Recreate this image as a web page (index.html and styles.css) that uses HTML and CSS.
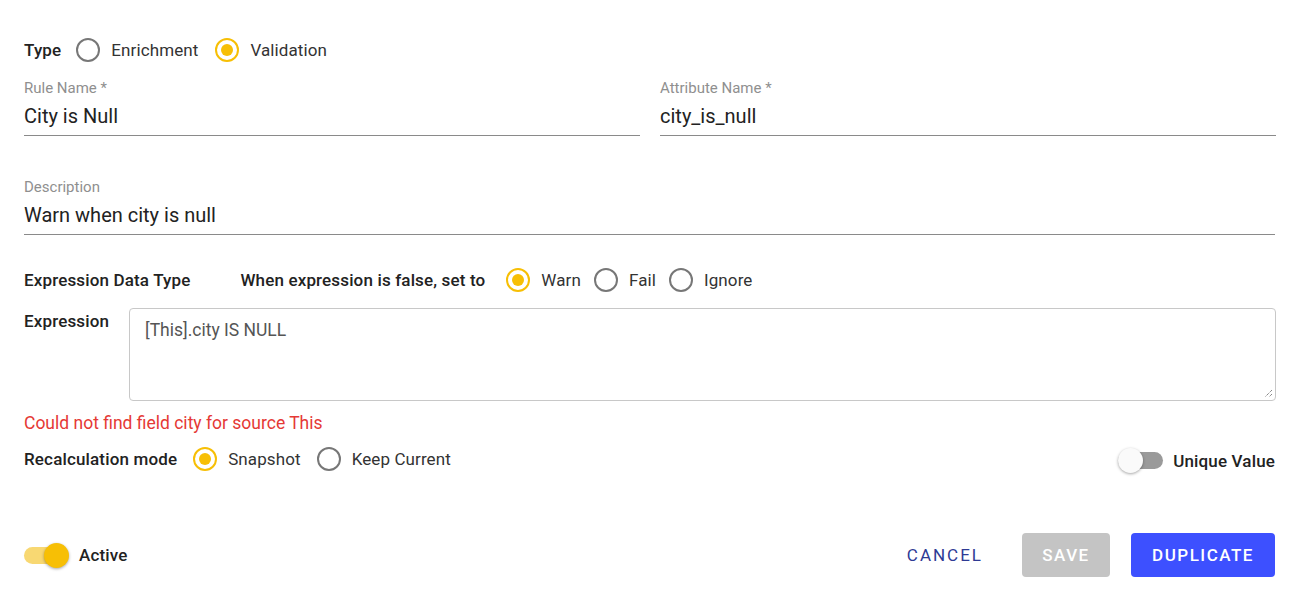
FILE: index.html
```html
<!DOCTYPE html>
<html>
<head>
<meta charset="utf-8">
<link rel="stylesheet" href="styles.css">
</head>
<body>
<div class="form">
  <div class="row type-row">
    <span class="strong-label">Type</span>
    <label class="radio"><span class="dot"></span><span>Enrichment</span></label>
    <label class="radio"><span class="dot on"></span><span>Validation</span></label>
  </div>

  <div class="two-col">
    <div class="field">
      <div class="f-label">Rule Name *</div>
      <div class="f-value">City is Null</div>
    </div>
    <div class="field">
      <div class="f-label">Attribute Name *</div>
      <div class="f-value">city_is_null</div>
    </div>
  </div>

  <div class="field desc">
    <div class="f-label">Description</div>
    <div class="f-value">Warn when city is null</div>
  </div>

  <div class="row expr-type-row">
    <span class="strong-label">Expression Data Type</span>
    <span class="strong-label when">When expression is false, set to</span>
    <label class="radio"><span class="dot on"></span><span>Warn</span></label>
    <label class="radio"><span class="dot"></span><span>Fail</span></label>
    <label class="radio"><span class="dot"></span><span>Ignore</span></label>
  </div>

  <div class="expr-row">
    <span class="strong-label expr-label">Expression</span>
    <div class="textarea">
      <span>[This].city IS NULL</span>
      <svg class="grip" width="10" height="10" viewBox="0 0 10 10"><path d="M9 2 L2 9 M9 6 L6 9" stroke="#555" stroke-width="1" stroke-dasharray="1 1" fill="none"/></svg>
    </div>
  </div>

  <div class="error">Could not find field city for source This</div>

  <div class="recalc-row">
    <div class="row">
      <span class="strong-label">Recalculation mode</span>
      <label class="radio"><span class="dot on"></span><span>Snapshot</span></label>
      <label class="radio"><span class="dot"></span><span>Keep Current</span></label>
    </div>
    <div class="switch-wrap unique">
      <span class="switch off"><span class="track"></span><span class="thumb"></span></span>
      <span class="strong-label">Unique Value</span>
    </div>
  </div>

  <div class="footer">
    <div class="switch-wrap">
      <span class="switch on"><span class="track"></span><span class="thumb"></span></span>
      <span class="strong-label">Active</span>
    </div>
    <div class="buttons">
      <button class="btn text">CANCEL</button>
      <button class="btn disabled">SAVE</button>
      <button class="btn primary">DUPLICATE</button>
    </div>
  </div>
</div>
</body>
</html>
```

FILE: styles.css
```css
* { box-sizing: border-box; }
html, body { margin: 0; padding: 0; background: #fff; }
body {
  font-family: Roboto, "Liberation Sans", sans-serif;
  color: #212121;
  width: 1300px;
  height: 614px;
  overflow: hidden;
}
.form {
  padding: 38px 24px 0 24px;
  display: flex;
  flex-direction: column;
}
.row {
  display: flex;
  align-items: center;
  height: 24px;
}
.strong-label {
  font-size: 17px;
  font-weight: 500;
  letter-spacing: 0.15px;
  color: #222;
  line-height: 24px;
  white-space: nowrap;
}
.type-row .strong-label { margin-right: 15px; }
.radio {
  display: flex;
  align-items: center;
  font-size: 17px;
  letter-spacing: 0.1px;
  color: #333;
  margin-right: 15px;
  line-height: 24px;
}
.type-row .radio { margin-right: 17px; }
.dot {
  width: 24px;
  height: 24px;
  border: 2px solid #777;
  border-radius: 50%;
  margin-right: 11px;
  position: relative;
  flex: none;
}
.dot.on { border-color: #f7bf05; }
.dot.on::after {
  content: "";
  position: absolute;
  left: 4px; top: 4px;
  width: 12px; height: 12px;
  border-radius: 50%;
  background: #f7bf05;
}
.two-col {
  display: flex;
  gap: 20px;
  margin-top: 17px;
}
.two-col .field { flex: 1; }
.field {
  border-bottom: 1px solid #8a8a8a;
  padding-bottom: 5px;
}
.f-label {
  font-size: 15px;
  line-height: 18px;
  color: #8f8f8f;
}
.f-value {
  font-size: 20px;
  line-height: 28px;
  color: #222;
  margin-top: 5px;
}
.desc {
  margin-top: 42px;
  margin-right: 1px;
}
.expr-type-row { margin-top: 33px; }
.expr-type-row .strong-label { margin-right: 50px; }
.expr-type-row .strong-label.when { margin-right: 21px; }
.expr-type-row .radio { margin-right: 13px; }
.expr-row {
  display: flex;
  align-items: flex-start;
  margin-top: 16px;
}
.expr-label {
  width: 105px;
  line-height: 26px;
  flex: none;
}
.textarea {
  flex: 1;
  height: 93px;
  border: 1px solid #c8c8c8;
  border-radius: 4px;
  padding: 11px 15px;
  font-size: 17.5px;
  line-height: 20px;
  color: #555;
  position: relative;
}
.grip {
  position: absolute;
  right: 2px;
  bottom: 2px;
}
.error {
  color: #e53935;
  font-size: 17.5px;
  line-height: 22px;
  margin-top: 11px;
}
.recalc-row {
  display: flex;
  justify-content: space-between;
  align-items: center;
  margin-top: 10px;
}
.recalc-row .row .strong-label { margin-right: 16px; }
.recalc-row .radio { margin-right: 16px; }
.switch-wrap {
  display: flex;
  align-items: center;
}
.unique { margin-top: 4px; margin-right: 1px; }
.switch {
  position: relative;
  width: 45px;
  height: 25px;
  margin-right: 10px;
  flex: none;
}
.track {
  position: absolute;
  left: 0; top: 4px;
  width: 45px;
  height: 17px;
  border-radius: 9px;
}
.thumb {
  position: absolute;
  top: 0;
  width: 25px;
  height: 25px;
  border-radius: 50%;
  box-shadow: 0 1px 3px rgba(0,0,0,0.35);
}
.switch.on .track { background: #f8d872; width: 42px; }
.switch.on .thumb { left: 20px; background: #f7bf05; }
.switch.off .track { background: #9a9a9a; }
.switch.off .thumb { left: 0; background: #fafafa; }
.footer {
  display: flex;
  justify-content: space-between;
  align-items: center;
  margin-top: 60px;
  margin-right: 1px;
}
.buttons {
  display: flex;
  gap: 21px;
}
.btn {
  font-family: Roboto, "Liberation Sans", sans-serif;
  font-size: 17px;
  font-weight: 500;
  letter-spacing: 1.5px;
  height: 44px;
  border: none;
  border-radius: 4px;
  padding: 0 20px;
  background: none;
}
.btn.text {
  color: #2e3a94;
  font-weight: 400;
  letter-spacing: 2px;
  padding: 0 18px 0 22px;
}
.btn.disabled {
  background: #c4c4c4;
  color: #fff;
  width: 88px;
}
.btn.primary {
  background: #3d50ff;
  color: #fff;
  width: 144px;
}
```
